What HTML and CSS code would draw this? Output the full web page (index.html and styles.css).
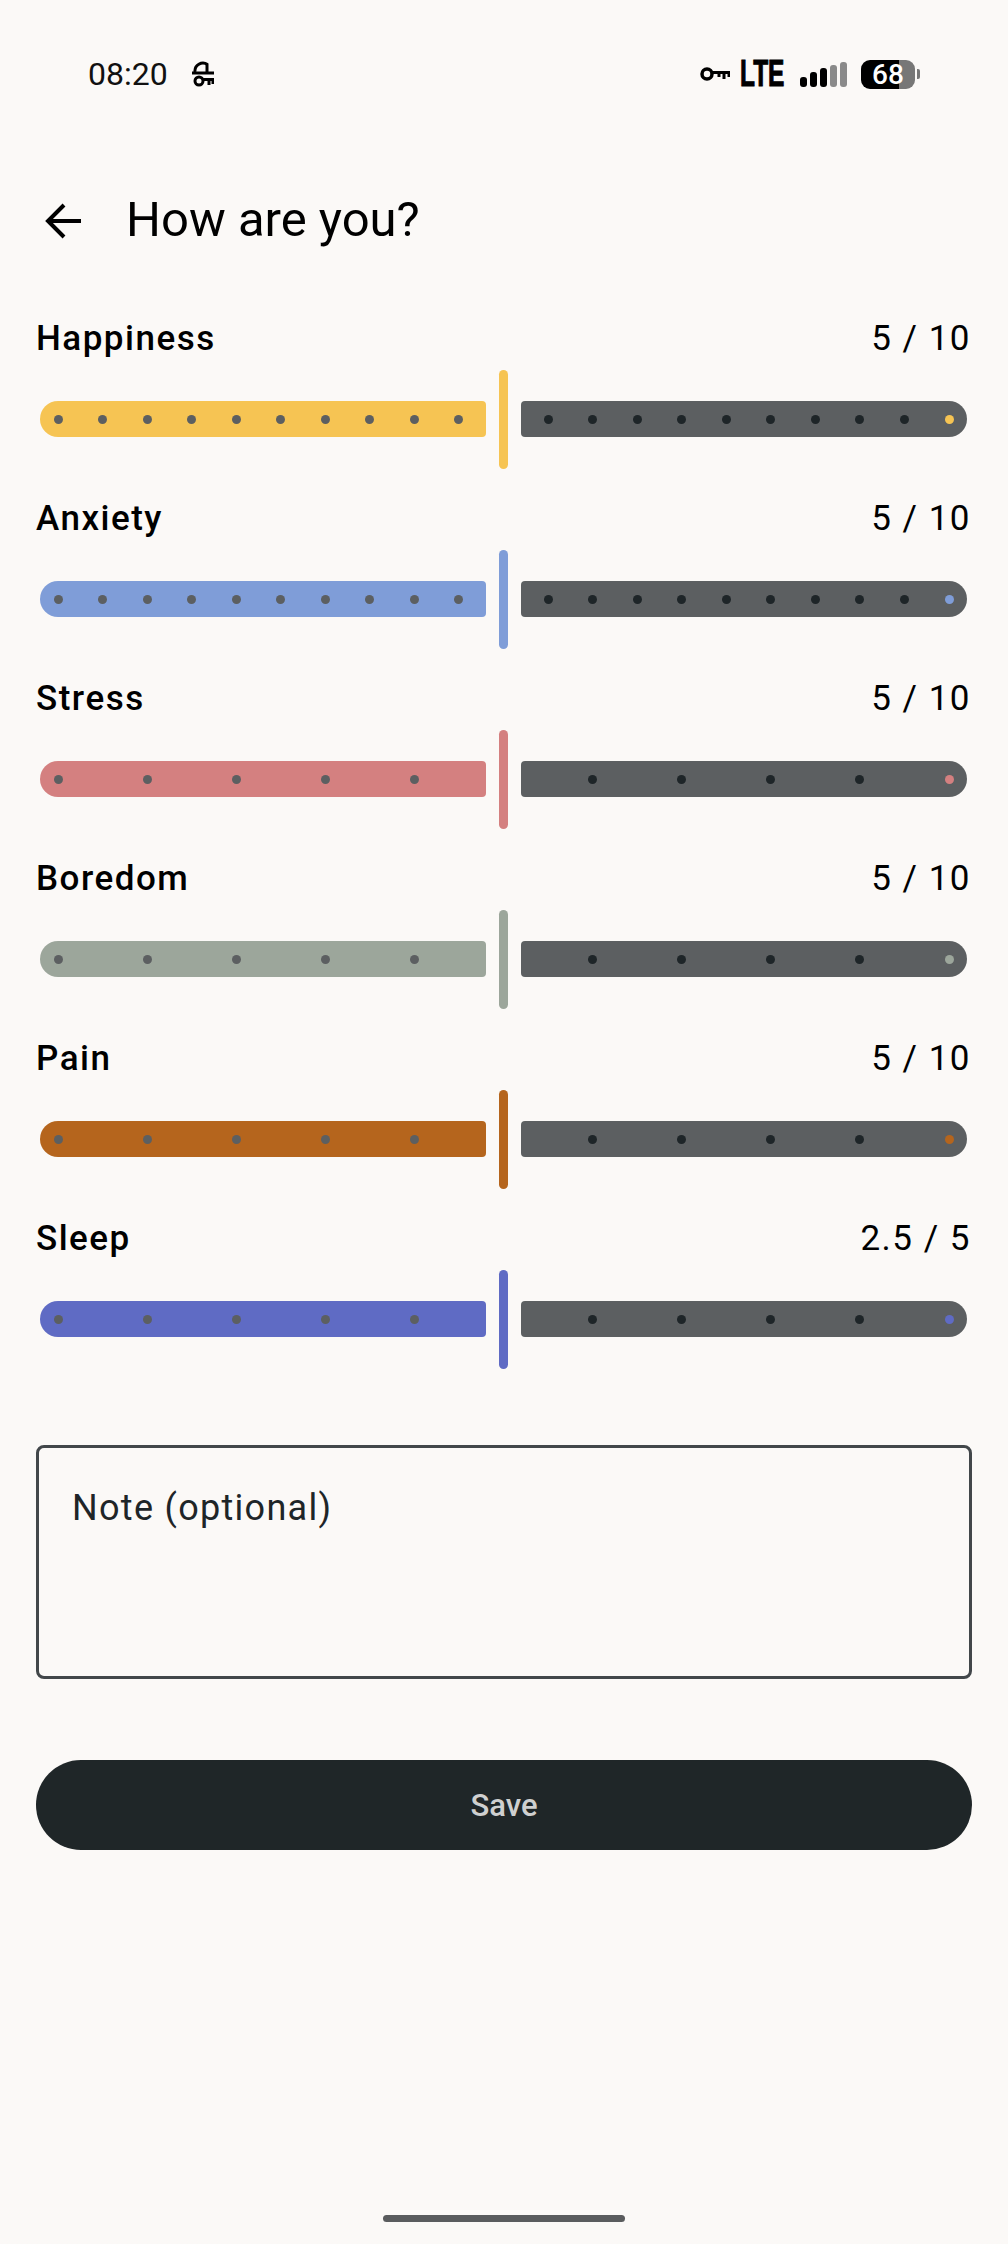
FILE: index.html
```html
<!DOCTYPE html>
<html lang="en">
<head>
    <meta charset="UTF-8">
    <meta name="viewport" content="width=device-width, initial-scale=1.0">
    <title>How are you?</title>
    <link rel="stylesheet" href="styles.css">
</head>
<body>

    <div class="status-bar">
        <div class="status-left">
            <span class="clock">08:20</span>
            <svg class="wifi-key" viewBox="0 0 22 26" width="22" height="26">
                <path d="M3 11 A8 8 0 0 1 15.5 3.5" fill="none" stroke="#000" stroke-width="3"/>
                <path d="M15 2.5 V11" fill="none" stroke="#000" stroke-width="3"/>
                <path d="M0 12 H22" fill="none" stroke="#000" stroke-width="3"/>
                <circle cx="7" cy="20" r="4" fill="none" stroke="#000" stroke-width="3"/>
                <path d="M11 18.5 H22 M17 18.5 V24 M21 18.5 V23" fill="none" stroke="#000" stroke-width="3"/>
            </svg>
        </div>
        <div class="status-right">
            <svg class="vpn-key" viewBox="0 0 30 16" width="30" height="16">
                <circle cx="7" cy="8" r="5" fill="none" stroke="#000" stroke-width="3.5"/>
                <path d="M12 6.5 H29 V11 M24 7 V13 M19 7 V11" fill="none" stroke="#000" stroke-width="3"/>
            </svg>
            <span class="network">LTE</span>
            <div class="signal">
                <span class="bar bar-1"></span>
                <span class="bar bar-2"></span>
                <span class="bar bar-3"></span>
                <span class="bar bar-4 weak"></span>
                <span class="bar bar-5 weak"></span>
            </div>
            <div class="battery">
                <div class="battery-body"><span>68</span></div>
                <div class="battery-tip"></div>
            </div>
        </div>
    </div>

    <div class="top-bar">
        <svg class="back-arrow" viewBox="0 0 36 36" width="36" height="36">
            <path d="M36 18 H3 M19 2 L3 18 L19 34" fill="none" stroke="#000" stroke-width="4"/>
        </svg>
        <h1>How are you?</h1>
    </div>

    <div class="slider-list">

        <div class="slider-row happiness">
            <div class="slider-label"><span>Happiness</span><span class="slider-value">5 / 10</span></div>
            <div class="slider">
                <div class="track track-on">
                    <i></i><i></i><i></i><i></i><i></i><i></i><i></i><i></i><i></i><i></i>
                </div>
                <div class="thumb"></div>
                <div class="track track-off">
                    <i></i><i></i><i></i><i></i><i></i><i></i><i></i><i></i><i></i><i></i>
                </div>
            </div>
        </div>

        <div class="slider-row anxiety">
            <div class="slider-label"><span>Anxiety</span><span class="slider-value">5 / 10</span></div>
            <div class="slider">
                <div class="track track-on">
                    <i></i><i></i><i></i><i></i><i></i><i></i><i></i><i></i><i></i><i></i>
                </div>
                <div class="thumb"></div>
                <div class="track track-off">
                    <i></i><i></i><i></i><i></i><i></i><i></i><i></i><i></i><i></i><i></i>
                </div>
            </div>
        </div>

        <div class="slider-row stress">
            <div class="slider-label"><span>Stress</span><span class="slider-value">5 / 10</span></div>
            <div class="slider coarse">
                <div class="track track-on">
                    <i></i><i></i><i></i><i></i><i></i>
                </div>
                <div class="thumb"></div>
                <div class="track track-off">
                    <i></i><i></i><i></i><i></i><i></i>
                </div>
            </div>
        </div>

        <div class="slider-row boredom">
            <div class="slider-label"><span>Boredom</span><span class="slider-value">5 / 10</span></div>
            <div class="slider coarse">
                <div class="track track-on">
                    <i></i><i></i><i></i><i></i><i></i>
                </div>
                <div class="thumb"></div>
                <div class="track track-off">
                    <i></i><i></i><i></i><i></i><i></i>
                </div>
            </div>
        </div>

        <div class="slider-row pain">
            <div class="slider-label"><span>Pain</span><span class="slider-value">5 / 10</span></div>
            <div class="slider coarse">
                <div class="track track-on">
                    <i></i><i></i><i></i><i></i><i></i>
                </div>
                <div class="thumb"></div>
                <div class="track track-off">
                    <i></i><i></i><i></i><i></i><i></i>
                </div>
            </div>
        </div>

        <div class="slider-row sleep">
            <div class="slider-label"><span>Sleep</span><span class="slider-value">2.5 / 5</span></div>
            <div class="slider coarse">
                <div class="track track-on">
                    <i></i><i></i><i></i><i></i><i></i>
                </div>
                <div class="thumb"></div>
                <div class="track track-off">
                    <i></i><i></i><i></i><i></i><i></i>
                </div>
            </div>
        </div>

    </div>

    <div class="note-box">Note (optional)</div>

    <button type="button" class="save-button">Save</button>

    <div class="home-indicator"></div>

</body>
</html>
```

FILE: styles.css
```css
body {
    font-family: Roboto, "Liberation Sans", sans-serif;
    background-color: #fbf9f7;
    margin: 0;
    padding: 0;
    color: black;
    width: 1008px;
    height: 2244px;
    overflow: hidden;
    position: relative;
}

.status-bar {
    height: 76px;
    padding: 36px 88px 0 88px;
    display: flex;
    justify-content: space-between;
    align-items: center;
}

.status-left {
    display: flex;
    align-items: center;
    gap: 24px;
}

.clock {
    font-size: 32px;
    color: #111;
}

.status-right {
    display: flex;
    align-items: center;
}

.network {
    font-family: "Liberation Sans", sans-serif;
    font-weight: 700;
    font-size: 36px;
    line-height: 36px;
    margin-left: 10px;
    width: 46px;
    display: inline-block;
    transform: scaleX(0.68);
    transform-origin: left center;
    -webkit-text-stroke: 1px #000;
}

.signal {
    display: flex;
    align-items: flex-end;
    gap: 3px;
    height: 25px;
    margin-left: 14px;
}

.bar {
    width: 7px;
    background-color: #000;
    border-radius: 3px;
}

.bar.weak {
    background-color: #8a8a8a;
}

.bar-1 { height: 10px; }
.bar-2 { height: 15px; }
.bar-3 { height: 19px; }
.bar-4 { height: 22px; }
.bar-5 { height: 25px; }

.battery {
    display: flex;
    align-items: center;
    margin-left: 14px;
}

.battery-body {
    width: 54px;
    height: 29px;
    border-radius: 9px;
    background: linear-gradient(to right, #000 0, #000 38px, #777 38px, #777 100%);
    color: #fff;
    font-size: 28px;
    font-weight: 500;
    line-height: 29px;
    text-align: center;
}

.battery-tip {
    width: 3px;
    height: 10px;
    margin-left: 2px;
    background-color: #777;
    border-radius: 0 2px 2px 0;
}

.top-bar {
    height: 74px;
    margin-top: 70px;
    padding-left: 45px;
    display: flex;
    align-items: center;
}

.back-arrow {
    margin-top: 3px;
}

h1 {
    font-size: 49px;
    font-weight: 400;
    margin: 0 0 0 45px;
}

.slider-list {
    margin-top: 57px;
    padding: 0 36px;
}

.slider-row {
    height: 180px;
}

.happiness { --accent: #f6c453; }
.anxiety { --accent: #7f9dd8; }
.stress { --accent: #d48080; }
.boredom { --accent: #9ca69b; }
.pain { --accent: #b5651d; }
.sleep { --accent: #5f6bc4; }

.slider-label {
    height: 50px;
    display: flex;
    justify-content: space-between;
    align-items: center;
    font-size: 35px;
    font-weight: 500;
    letter-spacing: 1.5px;
}

.slider-value {
    font-weight: 400;
    margin-right: 1px;
}

.slider {
    height: 99px;
    margin: 7px 5px 0 4px;
    display: flex;
    align-items: center;
    justify-content: space-between;
}

.track {
    width: 446px;
    height: 36px;
    margin-bottom: 1px;
    display: flex;
    align-items: center;
    gap: 35.55px;
    box-sizing: border-box;
}

.coarse .track {
    gap: 80.1px;
}

.track i {
    width: 9px;
    height: 9px;
    border-radius: 50%;
}

.track-on {
    padding-left: 13.5px;
    background-color: var(--accent);
    border-radius: 18px 4px 4px 18px;
}

.track-on i {
    background-color: #5c5f61;
}

.track-off {
    justify-content: flex-end;
    padding-right: 13.5px;
    background-color: #5c5f61;
    border-radius: 4px 18px 18px 4px;
}

.track-off i {
    background-color: #1e2528;
}

.track-off i:last-child {
    background-color: var(--accent);
}

.thumb {
    width: 9px;
    height: 99px;
    border-radius: 5px;
    background-color: var(--accent);
}

.note-box {
    margin: 52px 36px 0;
    height: 234px;
    box-sizing: border-box;
    border: 3px solid #42474a;
    border-radius: 8px;
    padding: 42px 33px;
    font-size: 36px;
    letter-spacing: 1.3px;
    line-height: 36px;
    color: #1e2528;
}

.save-button {
    display: block;
    margin: 81px 36px 0;
    width: 936px;
    height: 90px;
    border: none;
    border-radius: 45px;
    background-color: #1f2628;
    color: #cfd0d0;
    font-family: Roboto, "Liberation Sans", sans-serif;
    font-size: 31px;
    font-weight: 500;
}

.home-indicator {
    position: absolute;
    left: 383px;
    top: 2215px;
    width: 242px;
    height: 7px;
    border-radius: 4px;
    background-color: #5a5c5e;
}
```
